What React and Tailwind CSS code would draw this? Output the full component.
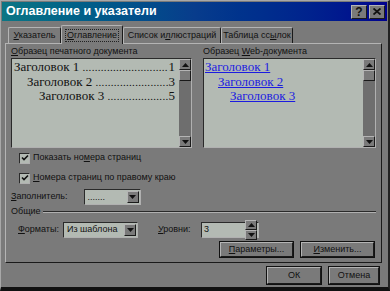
import React from 'react';

const raised = 'border border-t-[#b4b4b4] border-l-[#b4b4b4] border-r-[#1a1a1a] border-b-[#1a1a1a]';
const sunken = 'border border-t-[#2a2a2a] border-l-[#2a2a2a] border-r-[#b0b0b0] border-b-[#b0b0b0]';

const U = ({ children }) => <span className="underline underline-offset-[1px]">{children}</span>;

const Arrow = ({ up }) => (
  <svg width="7" height="4" viewBox="0 0 7 4">
    <path d={up ? 'M0 4 L3.5 0 L7 4 Z' : 'M0 0 L7 0 L3.5 4 Z'} fill="#111" />
  </svg>
);

const SmallBtn = ({ up, className = '' }) => (
  <div className={`w-[11px] h-[10px] bg-[#7a7a7a] flex items-center justify-center ${raised} ${className}`}>
    <Arrow up={up} />
  </div>
);

const Scrollbar = () => (
  <div className="w-[12px] shrink-0 h-full bg-[#6e6e6e] flex flex-col justify-between">
    <div className="flex flex-col">
      <SmallBtn up className="w-[12px] h-[11px]" />
      <div className={`w-[12px] h-[11px] bg-[#7a7a7a] ${raised}`} />
    </div>
    <SmallBtn className="w-[12px] h-[11px]" />
  </div>
);

const Combo = ({ w, children }) => (
  <div className={`h-[16px] ${w} bg-[#b3bab3] flex items-center justify-between pl-[3px] pr-[1px] ${sunken}`}>
    <span className="text-[9px] text-[#111] leading-none whitespace-nowrap">{children}</span>
    <SmallBtn className="h-[12px] w-[12px]" />
  </div>
);

const Check = ({ children }) => (
  <div className="flex items-center gap-[3px] h-[14px]">
    <div className={`w-[11px] h-[11px] bg-[#b3bab3] flex items-center justify-center ${sunken}`}>
      <svg width="8" height="8" viewBox="0 0 8 8">
        <path d="M1 3.5 L3 5.5 L7 1.5" stroke="#111" strokeWidth="1.6" fill="none" />
      </svg>
    </div>
    <span className="text-[9px] text-[#111] whitespace-nowrap">{children}</span>
  </div>
);

const Button = ({ w, h = 'h-[17px]', children }) => (
  <div className={`${h} ${w} bg-[#7a7a7a] border border-[#111] flex`}>
    <div className={`flex-1 flex items-center justify-center text-[9px] text-[#111] whitespace-nowrap ${raised}`}>{children}</div>
  </div>
);

const Tab = ({ active, children, w }) => (
  <div
    className={`${w} ${active ? 'h-[19px] -mb-[1px] z-10 bg-[#7a7a7a]' : 'h-[16px]'} border-t border-l border-r border-t-[#b4b4b4] border-l-[#b4b4b4] border-r-[#1a1a1a] rounded-t-[2px] flex items-center justify-center text-[9px] text-[#111] whitespace-nowrap`}
  >
    <span className={active ? 'border border-dotted border-[#222] px-[1px] leading-[11px]' : ''}>{children}</span>
  </div>
);

const serif = { fontFamily: '"Liberation Serif", "Times New Roman", serif' };

const tocRows = [
  ['Заголовок 1', 'pl-0', '1', 28],
  ['Заголовок 2', 'pl-[13px]', '3', 24],
  ['Заголовок 3', 'pl-[25px]', '5', 20],
];

export default function App() {
  return (
    <div
      className="w-[390px] h-[291px] bg-[#7a7a7a] flex flex-col border-t border-l border-t-[#a8a8a8] border-l-[#a8a8a8] border-r-2 border-b-[4px] border-r-[#222] border-b-[#111] overflow-hidden"
      style={{ fontFamily: '"Liberation Sans", Arial, sans-serif' }}
    >
      {/* title bar */}
      <div className="mx-[1px] mt-[1px] h-[19px] bg-gradient-to-r from-[#0c7684] via-[#083c8c] to-[#00008e] flex items-center justify-between pl-[4px] pr-[2px]">
        <span className="text-white font-bold text-[12.5px]">Оглавление и указатели</span>
        <div className="flex gap-[2px]">
          <div className={`w-[16px] h-[14px] bg-[#7a7a7a] flex items-center justify-center text-[12px] font-bold text-[#111] ${raised}`}>?</div>
          <div className={`w-[16px] h-[14px] bg-[#7a7a7a] flex items-center justify-center ${raised}`}>
            <svg width="8" height="7" viewBox="0 0 8 7">
              <path d="M0.5 0.5 L7.5 6.5 M7.5 0.5 L0.5 6.5" stroke="#111" strokeWidth="1.8" />
            </svg>
          </div>
        </div>
      </div>

      {/* tabs */}
      <div className="mt-[2px] pl-[7px] flex items-end h-[20px]">
        <Tab w="w-[53px]"><U>У</U>казатель</Tab>
        <Tab active w="w-[62px]"><U>О</U>главление</Tab>
        <Tab w="w-[98px]">Список и<U>л</U>люстраций</Tab>
        <Tab w="w-[72px]">Таблица сс<U>ы</U>лок</Tab>
      </div>

      {/* panel */}
      <div className={`ml-[4px] mr-[6px] h-[220px] flex flex-col px-[5px] pt-[1px] ${raised}`}>
        <div className="flex gap-[11px]">
          {/* printed */}
          <div className="w-[181px] flex flex-col">
            <div className="text-[9px] text-[#111] h-[13px] leading-[13px] whitespace-nowrap"><U>О</U>бразец печатного документа</div>
            <div className={`h-[90px] bg-[#b3bab3] flex ${sunken}`}>
              <div className="flex-1 min-w-0 overflow-hidden pl-[2px] pr-[4px] pt-[1px] text-[13px] leading-[14.5px] text-[#111]" style={serif}>
                {tocRows.map(([t, p, n, d]) => (
                  <div key={t} className={`flex items-baseline ${p} whitespace-nowrap`}>
                    <span className="shrink-0">{t}&nbsp;</span>
                    <span className="flex-1 min-w-0 text-[11px] tracking-[0.3px]">{'.'.repeat(d)}</span>
                    <span className="shrink-0">{n}</span>
                  </div>
                ))}
              </div>
              <Scrollbar />
            </div>
            <div className="pl-[8px] mt-[3px] flex flex-col gap-[6px]">
              <Check>Показать но<U>м</U>ера страниц</Check>
              <Check><U>Н</U>омера страниц по правому краю</Check>
            </div>
            <div className="flex items-center mt-[4px] gap-[16px] h-[16px]">
              <span className="text-[9px] text-[#111] whitespace-nowrap"><U>З</U>аполнитель:</span>
              <Combo w="w-[57px]">.......</Combo>
            </div>
          </div>
          {/* web */}
          <div className="w-[176px] flex flex-col">
            <div className="text-[9px] text-[#111] h-[13px] leading-[13px] whitespace-nowrap">Образец <U>W</U>eb-документа</div>
            <div className={`h-[90px] bg-[#b3bab3] flex ${sunken}`}>
              <div className="flex-1 min-w-0 pl-[1px] pt-[1px] text-[13px] leading-[14.5px] text-[#1c1ce0] underline" style={serif}>
                <div>Заголовок 1</div>
                <div className="pl-[13px]">Заголовок 2</div>
                <div className="pl-[25px]">Заголовок 3</div>
              </div>
              <Scrollbar />
            </div>
          </div>
        </div>

        {/* general */}
        <div className="flex items-center mt-[2px] h-[10px]">
          <span className="text-[9px] text-[#111] pr-[2px]">Общие</span>
          <div className="flex-1 h-[2px] border-t border-t-[#2a2a2a] border-b border-b-[#b0b0b0]" />
        </div>
        <div className="flex items-center mt-[4px] pl-[7px] h-[17px]">
          <span className="text-[9px] text-[#111] w-[45px]"><U>Ф</U>орматы:</span>
          <Combo w="w-[75px]">Из шаблона</Combo>
          <span className="text-[9px] text-[#111] ml-[20px] w-[43px]"><U>У</U>ровни:</span>
          <div className={`h-[16px] w-[58px] bg-[#b3bab3] flex items-center justify-between pl-[2px] pr-[1px] ${sunken}`}>
            <span className="text-[9px] text-[#111] leading-none">3</span>
            <div className="flex flex-col">
              <SmallBtn up className="h-[7px] w-[12px]" />
              <SmallBtn className="h-[7px] w-[12px]" />
            </div>
          </div>
        </div>
        <div className="flex justify-end gap-[6px] mt-[3px] pr-[1px]">
          <Button w="w-[75px]"><U>П</U>араметры...</Button>
          <Button w="w-[75px]"><U>И</U>зменить...</Button>
        </div>
      </div>

      {/* bottom buttons */}
      <div className="flex justify-end gap-[6px] pr-[8px] mt-[3px]">
        <Button w="w-[56px]" h="h-[19px]">ОК</Button>
        <Button w="w-[52px]" h="h-[19px]">Отмена</Button>
      </div>
    </div>
  );
}
